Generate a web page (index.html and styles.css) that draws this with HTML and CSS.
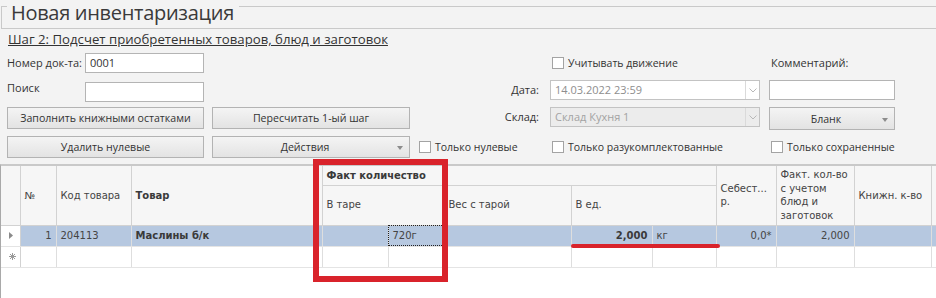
FILE: index.html
```html
<!DOCTYPE html>
<html lang="ru">
  <head>
    <meta charset="UTF-8" />
    <title>Новая инвентаризация</title>
    <link rel="stylesheet" href="styles.css">
  </head>
  <body>
    <div class="page">
      <!-- Заголовок -->
      <div class="title-box">
        <h1>Новая инвентаризация</h1>
      </div>
      <div class="step">Шаг 2: Подсчет приобретенных товаров, блюд и заготовок</div>

      <!-- Форма -->
      <div class="form">
        <div class="field c1">
          <span class="lbl-left">Номер док-та:</span>
          <div class="input">0001</div>
        </div>
        <label class="check c4 shift"><span class="box"></span>Учитывать движение</label>
        <div class="lbl c5">Комментарий:</div>

        <div class="field top c1">
          <span class="lbl-left">Поиск</span>
          <div class="input low"></div>
        </div>
        <div class="lbl-right c3">Дата:</div>
        <div class="combo c4">
          <span class="combo-text">14.03.2022 23:59</span>
          <span class="combo-btn">
            <svg width="8" height="5" viewBox="0 0 8 5"><polyline points="0.5,0.5 4,4 7.5,0.5" fill="none" stroke="#b8b8b8" stroke-width="1"/></svg>
          </span>
        </div>
        <div class="input c5"></div>

        <button class="btn c1">Заполнить книжными остатками</button>
        <button class="btn c2">Пересчитать 1-ый шаг</button>
        <div class="lbl-right c3">Склад:</div>
        <div class="combo disabled c4">
          <span class="combo-text">Склад Кухня 1</span>
          <span class="combo-btn">
            <svg width="8" height="5" viewBox="0 0 8 5"><polyline points="0.5,0.5 4,4 7.5,0.5" fill="none" stroke="#b8b8b8" stroke-width="1"/></svg>
          </span>
        </div>
        <button class="btn drop tall c5">Бланк<span class="arrow"></span></button>

        <button class="btn c1">Удалить нулевые</button>
        <button class="btn drop c2">Действия<span class="arrow"></span></button>
        <label class="check last c3 zero"><span class="box"></span>Только нулевые</label>
        <label class="check last c4 shift"><span class="box"></span>Только разукомплектованные</label>
        <label class="check last c5 shift"><span class="box"></span>Только сохраненные</label>
      </div>

      <!-- Таблица -->
      <div class="grid">
        <table>
          <colgroup>
            <col style="width: 19px">
            <col style="width: 36px">
            <col style="width: 75px">
            <col style="width: 191px">
            <col style="width: 66px">
            <col style="width: 56px">
            <col style="width: 127px">
            <col style="width: 81px">
            <col style="width: 64px">
            <col style="width: 60px">
            <col style="width: 78px">
            <col style="width: 77px">
            <col style="width: 20px">
          </colgroup>
          <thead>
            <tr class="h1row">
              <th rowspan="2"></th>
              <th rowspan="2">№</th>
              <th rowspan="2">Код товара</th>
              <th rowspan="2" class="bold">Товар</th>
              <th colspan="5" class="bold group">Факт количество</th>
              <th rowspan="2">Себест...<br>р.</th>
              <th rowspan="2">Факт. кол-во<br>с учетом<br>блюд и<br>заготовок</th>
              <th rowspan="2">Книжн. к-во</th>
              <th rowspan="2"></th>
            </tr>
            <tr class="h2row">
              <th colspan="2">В таре</th>
              <th>Вес с тарой</th>
              <th colspan="2">В ед.</th>
            </tr>
          </thead>
          <tbody>
            <tr class="selected">
              <td class="ind">
                <svg width="5" height="7" viewBox="0 0 5 7"><polygon points="0,0 4,3.5 0,7" fill="#8a8a8a"/></svg>
              </td>
              <td class="num">1</td>
              <td>204113</td>
              <td class="bold">Маслины б/к</td>
              <td></td>
              <td class="focus">720г</td>
              <td></td>
              <td class="num bold">2,000</td>
              <td>кг</td>
              <td class="num">0,0*</td>
              <td class="num">2,000</td>
              <td></td>
              <td></td>
            </tr>
            <tr class="new">
              <td class="ind">
                <svg width="7" height="7" viewBox="0 0 7 7"><path d="M3.5 0V7M0 3.5H7M1 1L6 6M6 1L1 6" stroke="#9a9a9a" stroke-width="1"/></svg>
              </td>
              <td></td><td></td><td></td><td></td><td></td><td></td><td></td><td></td><td></td><td></td><td></td><td></td>
            </tr>
          </tbody>
        </table>
      </div>

      <!-- Пометки -->
      <div class="mark-box"></div>
      <div class="mark-line"></div>
    </div>
  </body>
</html>
```

FILE: styles.css
```css
body {
  margin: 0;
  padding: 0;
  background-color: #f3f3f3;
  color: #333;
  font-family: "Open Sans", "Noto Sans", sans-serif;
  overflow: hidden;
}

.page {
  position: relative;
  box-sizing: border-box;
  width: 936px;
  height: 298px;
  padding-top: 6px;
}

/* Заголовок */
.title-box {
  display: flex;
  margin-left: 1px;
  border-top: 1px solid #c9c9c9;
  border-left: 1px solid #c9c9c9;
  border-bottom: 1px solid #c9c9c9;
  padding-bottom: 2px;
}
.title-box h1 {
  margin: -7px 0 0 5px;
  padding: 0 5px 0 4px;
  background-color: #f3f3f3;
  font-weight: normal;
  font-size: 20px;
  letter-spacing: -0.3px;
  line-height: 26px;
  color: #3a3a3a;
}

.step {
  margin: 2px 0 0 8px;
  font-size: 13.2px;
  line-height: 16px;
  text-decoration: underline;
  color: #333;
}

/* Форма */
.form {
  display: grid;
  grid-template-columns: [c1] 197px 8px [c2] 198px [c3] 140px [c4] 212px 7px [c5] 126px;
  grid-template-rows: 27px 27px 29px 22px;
  align-items: start;
  margin-top: 6px;
  padding-left: 7px;
  font-size: 11px;
  white-space: nowrap;
}
.c1 { grid-column: c1 / span 1; }
.c2 { grid-column: c2 / span 1; }
.c3 { grid-column: c3 / span 1; }
.c4 { grid-column: c4 / span 1; }
.c5 { grid-column: c5 / span 1; }

.field {
  display: flex;
  align-items: center;
  height: 20px;
}
.field.top {
  align-items: flex-start;
  height: 22px;
}
.lbl-left {
  width: 78px;
  line-height: 16px;
}

.input {
  box-sizing: border-box;
  height: 20px;
  width: 126px;
  background-color: white;
  border: 1px solid #b4b4b4;
  padding: 0 4px;
  line-height: 18px;
  color: #333;
}
.field .input {
  width: 119px;
}
.input.low {
  margin-top: 2px;
}

.lbl {
  height: 20px;
  line-height: 20px;
  padding-left: 2px;
}
.lbl-right {
  height: 20px;
  line-height: 20px;
  text-align: right;
  padding-right: 11px;
}

.check {
  display: flex;
  align-items: center;
  gap: 4px;
  height: 20px;
  font-size: 10.5px;
}
.check.last {
  height: 22px;
}
.check.shift {
  margin-left: 2px;
}
.check.zero {
  margin-left: 9px;
}
.check .box {
  flex: none;
  box-sizing: border-box;
  width: 12px;
  height: 12px;
  background-color: white;
  border: 1px solid #a3a3a3;
}

.combo {
  box-sizing: border-box;
  display: flex;
  height: 20px;
  width: 210px;
  background-color: white;
  border: 1px solid #c3c3c3;
  color: #8e8e8e;
}
.combo.disabled {
  background-color: #ececec;
  color: #a3a3a3;
}
.combo-text {
  flex: 1;
  padding-left: 4px;
  line-height: 18px;
}
.combo-btn {
  display: flex;
  align-items: center;
  justify-content: center;
  width: 13px;
  border-left: 1px solid #dadada;
}

.btn {
  position: relative;
  box-sizing: border-box;
  height: 22px;
  width: 100%;
  padding: 0;
  border: 1px solid #b3b3b3;
  background: linear-gradient(#f4f4f4, #e3e3e3);
  font-family: inherit;
  font-size: 10.6px;
  color: #333;
}
.btn.tall {
  height: 23px;
}
.btn.drop {
  padding-right: 12px;
}
.btn .arrow {
  position: absolute;
  right: 6px;
  top: 50%;
  margin-top: -1px;
  border-left: 3px solid transparent;
  border-right: 3px solid transparent;
  border-top: 4px solid #8c8c8c;
}

/* Таблица */
.grid {
  position: absolute;
  left: 0;
  top: 164px;
  width: 936px;
  height: 134px;
  box-sizing: border-box;
  background-color: white;
  border-top: 2px solid #c9c9c9;
  border-left: 1px solid #a9a9a9;
  overflow: hidden;
}
.grid table {
  table-layout: fixed;
  border-collapse: collapse;
  width: 950px;
  font-family: "DejaVu Sans", Verdana, sans-serif;
  font-size: 10px;
  color: #444;
}
.grid th {
  background-color: #f6f6f6;
  border-right: 1px solid #d2d2d2;
  border-bottom: 1px solid #d2d2d2;
  padding: 0 4px;
  text-align: left;
  font-weight: normal;
  line-height: 13.5px;
  vertical-align: middle;
  white-space: nowrap;
}
.grid .h1row {
  height: 19px;
}
.grid .h2row {
  height: 40px;
}
.grid th.group {
  padding-top: 1px;
}
.grid .bold {
  font-weight: bold;
  color: #3a3a3a;
}
.grid td {
  height: 20px;
  padding: 0 4px;
  border-right: 1px solid #dedede;
  border-bottom: 1px solid #e4e4e4;
  white-space: nowrap;
}
.grid td.num {
  text-align: right;
}
.grid td.ind {
  padding: 0 0 0 8px;
  border-right: 1px solid #d2d2d2;
  background-color: white;
}
.grid tr.selected td {
  background-color: #b6c8e0;
}
.grid tr.selected td.ind {
  background-color: white;
}
.grid td.focus {
  outline: 1px dotted #222;
  outline-offset: -1px;
}

/* Пометки */
.mark-box {
  position: absolute;
  left: 313px;
  top: 159px;
  width: 123px;
  height: 111px;
  border: 6px solid #d9232b;
}
.mark-line {
  position: absolute;
  left: 571px;
  top: 244px;
  width: 149px;
  height: 4px;
  border-radius: 2px;
  background-color: #d9232b;
}
```
